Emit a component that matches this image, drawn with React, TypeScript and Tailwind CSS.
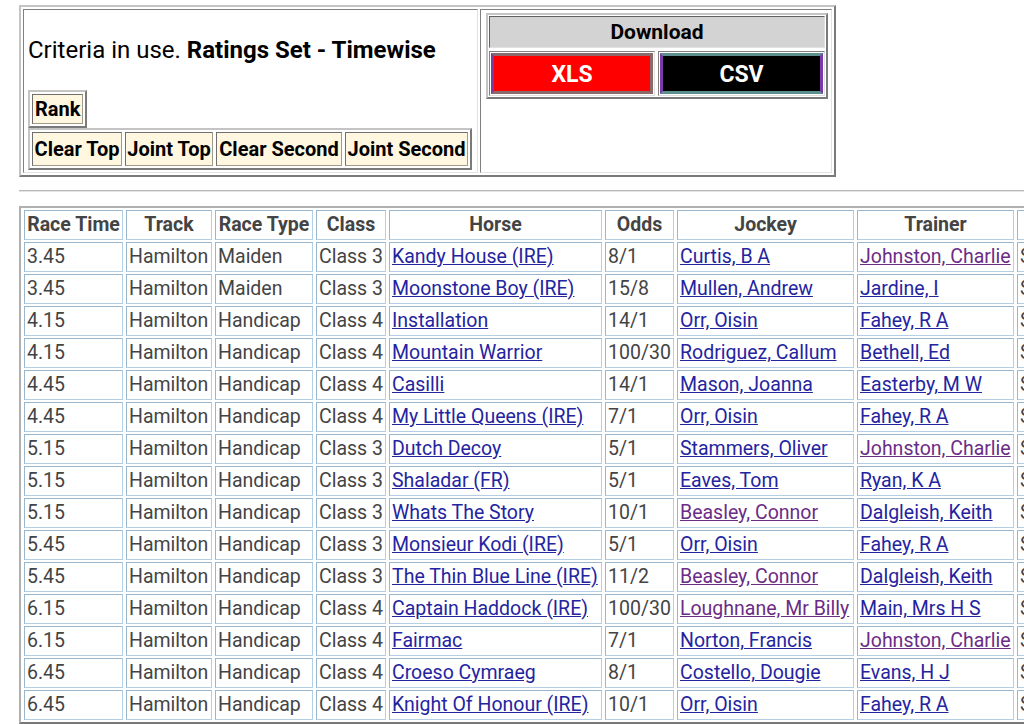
import React from "react";

type Row = {
  time: string;
  type: string;
  cls: string;
  horse: string;
  odds: string;
  jockey: string;
  jv?: boolean;
  trainer: string;
  tv?: boolean;
};

const rows: Row[] = [
  { time: "3.45", type: "Maiden", cls: "Class 3", horse: "Kandy House (IRE)", odds: "8/1", jockey: "Curtis, B A", trainer: "Johnston, Charlie", tv: true },
  { time: "3.45", type: "Maiden", cls: "Class 3", horse: "Moonstone Boy (IRE)", odds: "15/8", jockey: "Mullen, Andrew", trainer: "Jardine, I" },
  { time: "4.15", type: "Handicap", cls: "Class 4", horse: "Installation", odds: "14/1", jockey: "Orr, Oisin", trainer: "Fahey, R A" },
  { time: "4.15", type: "Handicap", cls: "Class 4", horse: "Mountain Warrior", odds: "100/30", jockey: "Rodriguez, Callum", trainer: "Bethell, Ed" },
  { time: "4.45", type: "Handicap", cls: "Class 4", horse: "Casilli", odds: "14/1", jockey: "Mason, Joanna", trainer: "Easterby, M W" },
  { time: "4.45", type: "Handicap", cls: "Class 4", horse: "My Little Queens (IRE)", odds: "7/1", jockey: "Orr, Oisin", trainer: "Fahey, R A" },
  { time: "5.15", type: "Handicap", cls: "Class 3", horse: "Dutch Decoy", odds: "5/1", jockey: "Stammers, Oliver", trainer: "Johnston, Charlie", tv: true },
  { time: "5.15", type: "Handicap", cls: "Class 3", horse: "Shaladar (FR)", odds: "5/1", jockey: "Eaves, Tom", trainer: "Ryan, K A" },
  { time: "5.15", type: "Handicap", cls: "Class 3", horse: "Whats The Story", odds: "10/1", jockey: "Beasley, Connor", jv: true, trainer: "Dalgleish, Keith" },
  { time: "5.45", type: "Handicap", cls: "Class 3", horse: "Monsieur Kodi (IRE)", odds: "5/1", jockey: "Orr, Oisin", trainer: "Fahey, R A" },
  { time: "5.45", type: "Handicap", cls: "Class 3", horse: "The Thin Blue Line (IRE)", odds: "11/2", jockey: "Beasley, Connor", jv: true, trainer: "Dalgleish, Keith" },
  { time: "6.15", type: "Handicap", cls: "Class 4", horse: "Captain Haddock (IRE)", odds: "100/30", jockey: "Loughnane, Mr Billy", jv: true, trainer: "Main, Mrs H S" },
  { time: "6.15", type: "Handicap", cls: "Class 4", horse: "Fairmac", odds: "7/1", jockey: "Norton, Francis", trainer: "Johnston, Charlie", tv: true },
  { time: "6.45", type: "Handicap", cls: "Class 4", horse: "Croeso Cymraeg", odds: "8/1", jockey: "Costello, Dougie", trainer: "Evans, H J" },
  { time: "6.45", type: "Handicap", cls: "Class 4", horse: "Knight Of Honour (IRE)", odds: "10/1", jockey: "Orr, Oisin", trainer: "Fahey, R A" },
];

const td =
  "h-[30px] px-[2px] py-0 border border-[#b4cfe3] border-t-[#98b6cc] border-l-[#98b6cc] text-left align-middle whitespace-nowrap overflow-hidden";
const th =
  "h-[30px] px-[1px] py-0 border border-[#b4cfe3] border-t-[#98b6cc] border-l-[#98b6cc] text-center align-middle whitespace-nowrap font-bold overflow-hidden";

function Link({ text, visited }: { text: string; visited?: boolean }) {
  return (
    <a href="#" className={visited ? "underline text-[#6b2c86]" : "underline text-[#2424a0]"}>
      {text}
    </a>
  );
}

function CreamCell({ label, w }: { label: string; w: string }) {
  return (
    <div
      className={`${w} h-[34px] flex items-center justify-center bg-[#fff7e0] border border-[#a09a88] border-t-[#6f6f6f] border-l-[#6f6f6f] font-bold text-[20px] text-black whitespace-nowrap`}
    >
      {label}
    </div>
  );
}

export default function App() {
  return (
    <div
      className="w-[1024px] h-[724px] overflow-hidden bg-white text-[#444]"
      style={{ fontFamily: "Roboto, 'Liberation Sans', sans-serif" }}
    >
      <div className="pl-[19px] pt-[5px]">
        {/* Criteria + download */}
        <div className="inline-flex gap-[2px] p-[2px] border-2 border-[#c4c4c4] border-b-[#7a7a7a] border-r-[#7a7a7a]">
          {/* left cell */}
          <div className="w-[455px] h-[164px] flex flex-col border border-[#e2e2e2] border-t-[#808080] border-l-[#808080]">
            <p className="mt-[26px] ml-[4px] text-[24px] leading-[28px] text-black whitespace-nowrap">
              Criteria in use. <span className="font-bold">Ratings Set - Timewise</span>
            </p>
            <div className="mt-[26px] ml-[4px] self-start p-[2px] border-2 border-[#c4c4c4] border-b-[#7a7a7a] border-r-[#7a7a7a]">
              <div className="h-[30px] px-[2px] flex items-center bg-[#fff7e0] border border-[#a09a88] border-t-[#6f6f6f] border-l-[#6f6f6f] font-bold text-[20px] text-black">
                Rank
              </div>
            </div>
            <div className="ml-[4px] self-start flex gap-[3px] p-[2px] border-2 border-[#c4c4c4] border-b-[#7a7a7a] border-r-[#7a7a7a]">
              <CreamCell label="Clear Top" w="w-[90px]" />
              <CreamCell label="Joint Top" w="w-[88px]" />
              <CreamCell label="Clear Second" w="w-[126px]" />
              <CreamCell label="Joint Second" w="w-[123px]" />
            </div>
          </div>
          {/* right cell */}
          <div className="w-[352px] h-[164px] border border-[#e2e2e2] border-t-[#808080] border-l-[#808080] pt-[3px] pl-[5px]">
            <div className="w-[342px] flex flex-col gap-[3px] p-[1px] border-2 border-[#c4c4c4] border-b-[#7a7a7a] border-r-[#7a7a7a]">
              <div className="h-[32px] pt-[2px] flex items-center justify-center bg-[#d3d3d3] border border-[#e0e0e0] border-t-[#606060] border-l-[#606060] font-bold text-[21px] text-black">
                Download
              </div>
              <div className="flex gap-[3px]">
                <div className="w-[166px] h-[45px] p-[1px] border border-[#e0e0e0] border-t-[#808080] border-l-[#808080]">
                  <div className="h-full pt-[3px] flex items-center justify-center bg-[#ff0000] border-[3px] border-[#8a6a6a] border-l-[#7a3aa8] text-white font-bold text-[23px]">
                    XLS
                  </div>
                </div>
                <div className="w-[167px] h-[45px] p-[1px] border border-[#e0e0e0] border-t-[#808080] border-l-[#808080]">
                  <div className="h-full pt-[3px] flex items-center justify-center bg-black border-[3px] border-[#5e8f8f] border-l-[#7a3aa8] border-r-[#7a3aa8] text-white font-bold text-[23px]">
                    CSV
                  </div>
                </div>
              </div>
            </div>
          </div>
        </div>

        <div className="mt-[13px] h-[2px] border-t border-[#b8b8b8] border-b border-b-[#e4e4e4]" />

        {/* Results table */}
        <table className="mt-[14px] table-fixed border-separate border-spacing-x-[3px] border-spacing-y-[2px] border-2 border-[#b0b0b0] border-b-[#777] border-r-[#777] text-[19.5px] leading-[24px] w-[1123px]">
          <colgroup>
            <col className="w-[99px]" />
            <col className="w-[86px]" />
            <col className="w-[98px]" />
            <col className="w-[70px]" />
            <col className="w-[213px]" />
            <col className="w-[69px]" />
            <col className="w-[177px]" />
            <col className="w-[157px]" />
            <col className="w-[120px]" />
          </colgroup>
          <thead>
            <tr>
              <th className={th}>Race Time</th>
              <th className={th}>Track</th>
              <th className={th}>Race Type</th>
              <th className={th}>Class</th>
              <th className={th}>Horse</th>
              <th className={th}>Odds</th>
              <th className={th}>Jockey</th>
              <th className={th}>Trainer</th>
              <th className={th}>Going</th>
            </tr>
          </thead>
          <tbody>
            {rows.map((r, i) => (
              <tr key={i}>
                <td className={td}>{r.time}</td>
                <td className={td}>Hamilton</td>
                <td className={td}>{r.type}</td>
                <td className={td}>{r.cls}</td>
                <td className={td}>
                  <Link text={r.horse} />
                </td>
                <td className={td}>{r.odds}</td>
                <td className={td}>
                  <Link text={r.jockey} visited={r.jv} />
                </td>
                <td className={td}>
                  <Link text={r.trainer} visited={r.tv} />
                </td>
                <td className={td}>Soft</td>
              </tr>
            ))}
          </tbody>
        </table>
      </div>
    </div>
  );
}
